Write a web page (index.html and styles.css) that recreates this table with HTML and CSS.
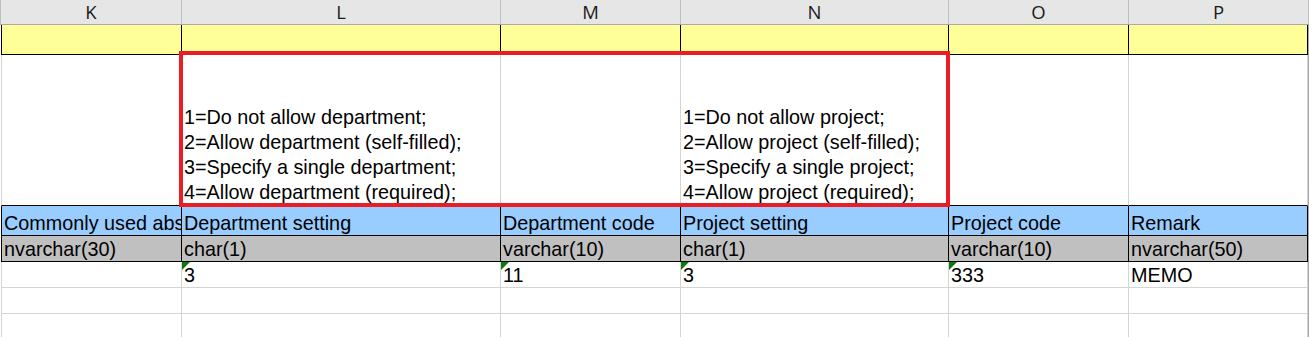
FILE: index.html
```html
<!DOCTYPE html>
<html>
<head>
<meta charset="utf-8">
<link rel="stylesheet" href="styles.css">
</head>
<body>
<div class="sheet">
  <div class="row hdr">
    <div class="c">K</div><div class="c">L</div><div class="c">M</div><div class="c">N</div><div class="c">O</div><div class="c">P</div>
  </div>
  <div class="body">
    <div class="row yellow">
      <div class="c"></div><div class="c"></div><div class="c"></div><div class="c"></div><div class="c"></div><div class="c"></div>
    </div>
    <div class="row tall">
      <div class="c"></div>
      <div class="c"><div class="lines"><span>1=Do not allow department;</span><span>2=Allow department (self-filled);</span><span>3=Specify a single department;</span><span>4=Allow department (required);</span></div></div>
      <div class="c"></div>
      <div class="c"><div class="lines"><span>1=Do not allow project;</span><span>2=Allow project (self-filled);</span><span>3=Specify a single project;</span><span>4=Allow project (required);</span></div></div>
      <div class="c"></div>
      <div class="c"></div>
    </div>
    <div class="row blue">
      <div class="c"><span class="clip">Commonly used abstract</span></div><div class="c">Department setting</div><div class="c">Department code</div><div class="c">Project setting</div><div class="c">Project code</div><div class="c">Remark</div>
    </div>
    <div class="row gray">
      <div class="c">nvarchar(30)</div><div class="c">char(1)</div><div class="c">varchar(10)</div><div class="c">char(1)</div><div class="c">varchar(10)</div><div class="c">nvarchar(50)</div>
    </div>
    <div class="row data">
      <div class="c"></div><div class="c flag">3</div><div class="c flag">11</div><div class="c flag">3</div><div class="c flag">333</div><div class="c">MEMO</div>
    </div>
    <div class="row data">
      <div class="c"></div><div class="c"></div><div class="c"></div><div class="c"></div><div class="c"></div><div class="c"></div>
    </div>
    <div class="row data">
      <div class="c"></div><div class="c"></div><div class="c"></div><div class="c"></div><div class="c"></div><div class="c"></div>
    </div>
    <div class="redbox"></div>
  </div>
</div>
</body>
</html>
```

FILE: styles.css
```css
* { box-sizing: border-box; }
html, body { margin: 0; padding: 0; background: #fff; }
body { width: 1309px; height: 337px; overflow: hidden; }

.sheet {
  width: 1309px;
  font-family: "Liberation Sans", Arial, sans-serif;
  font-size: 19.8px;
  color: #000;
}

.row {
  display: grid;
  grid-template-columns: 182px 319px 180px 268px 180px 180px;
}

.body {
  position: relative;
  padding-left: 1px;
  width: 1309px;
  border-right: 1px solid #a6a6a6;
}
.body .row {
  grid-template-columns: 181px 319px 180px 268px 180px 179px;
}

.c {
  overflow: hidden;
  white-space: nowrap;
  position: relative;
}
.clip {
  display: block;
  overflow: hidden;
  text-overflow: clip;
  max-width: 100%;
}

/* column header */
.hdr {
  height: 25px;
  background: #e6e6e6;
  border-bottom: 1px solid #a9a9a9;
  font-family: "Open Sans", "Liberation Sans", sans-serif;
  font-size: 18.5px;
  color: #1a1a1a;
  grid-template-columns: 182px 319px 180px 268px 180px 180px;
}
.hdr .c {
  border-right: 1px solid #bfbfbf;
  display: flex;
  align-items: center;
  justify-content: center;
  line-height: 24px;
}
.hdr .c:first-child { border-left: 1px solid #bfbfbf; }

/* generic cell text alignment (bottom, left) */
.yellow .c, .blue .c, .gray .c, .data .c, .tall .c {
  display: flex;
  align-items: flex-end;
  padding-left: 2px;
  line-height: 22px;
  padding-bottom: 1px;
}

.yellow { height: 30px; }
.yellow .c {
  background: #ffff99;
  border-right: 1px solid #000;
  border-bottom: 1px solid #000;
}
.yellow .c:first-child { border-left: 1px solid #000; }

.tall { height: 151px; }
.tall .c {
  border-right: 1px solid #d4d4d4;
  border-bottom: 1px solid #000;
  padding-bottom: 0;
}
.tall .c:first-child { border-left: 1px solid #d4d4d4; }
.lines {
  display: flex;
  flex-direction: column;
  line-height: 25px;
}

.blue { height: 30px; }
.blue .c {
  background: #99ccff;
  border-right: 1px solid #000;
  border-bottom: 1px solid #000;
}
.blue .c:first-child { border-left: 1px solid #000; }

.gray { height: 26px; }
.gray .c {
  background: #c0c0c0;
  border-right: 1px solid #000;
  border-bottom: 1px solid #000;
}
.gray .c:first-child { border-left: 1px solid #000; }

.data { height: 26px; }
.data .c {
  border-right: 1px solid #d4d4d4;
  border-bottom: 1px solid #d4d4d4;
}
.data .c:first-child { border-left: 1px solid #d4d4d4; }

.flag::before {
  content: "";
  position: absolute;
  left: 0;
  top: 0;
  width: 0;
  height: 0;
  border-top: 8px solid #0a7a0a;
  border-right: 8px solid transparent;
}

.redbox {
  position: absolute;
  left: 179px;
  top: 26px;
  width: 771px;
  height: 156px;
  border: 4px solid #ec1c24;
  pointer-events: none;
}
```
